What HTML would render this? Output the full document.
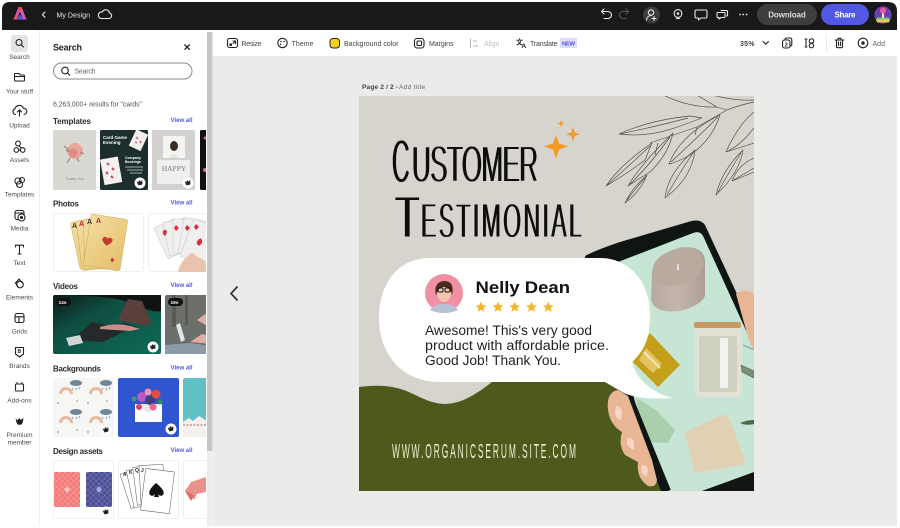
<!DOCTYPE html>
<html><head><meta charset="utf-8"><title>My Design</title>
<style>
html,body{margin:0;padding:0;background:#fff;width:900px;height:528px;overflow:hidden}
svg{display:block;filter:blur(.3px)}
text{font-family:"Liberation Sans",sans-serif}
.lb{font-size:6.5px;fill:#4a4a4a;text-anchor:middle}
.h{font-size:8px;font-weight:bold;fill:#2c2c2c}
.va{font-size:6px;font-weight:bold;fill:#5258e4;text-anchor:end}
.tb{font-size:7px;fill:#444}
.ic{fill:none;stroke:#222;stroke-width:1.1;stroke-linecap:round;stroke-linejoin:round}
.iw{fill:none;stroke:#e8e8e8;stroke-width:1.1;stroke-linecap:round;stroke-linejoin:round}
.leaf{fill:none;stroke:#4b4b47;stroke-width:.65;stroke-linejoin:round}
</style></head><body>
<svg width="900" height="528" viewBox="0 0 900 528" xmlns="http://www.w3.org/2000/svg">
<defs>
<clipPath id="pan"><rect x="40" y="32" width="166" height="494"/></clipPath>
<clipPath id="cv"><rect x="359" y="96" width="395" height="395"/></clipPath>
<filter id="thick" x="-5%" y="-5%" width="110%" height="110%"><feMorphology operator="erode" radius="0 .9" result="a"/><feMorphology in="a" operator="dilate" radius=".45 0"/></filter>
<linearGradient id="lg" x1="0" x2="1" y1="1" y2="0"><stop offset="0" stop-color="#ff5a3c"/><stop offset=".5" stop-color="#d14fd8"/><stop offset="1" stop-color="#ff9a2e"/></linearGradient>
<linearGradient id="vid" x1="0" x2="1" y1="0" y2="1"><stop offset="0" stop-color="#0c1a17"/><stop offset=".35" stop-color="#0f4f42"/><stop offset="1" stop-color="#0d6b55"/></linearGradient>
<linearGradient id="gold" x1="0" x2="1" y1="0" y2="1"><stop offset="0" stop-color="#f4dc9e"/><stop offset="1" stop-color="#e3bf6b"/></linearGradient>
<linearGradient id="cand" x1="0" x2="1"><stop offset="0" stop-color="#b7a99f"/><stop offset=".5" stop-color="#c4b6ab"/><stop offset="1" stop-color="#ad9f95"/></linearGradient>
<pattern id="rain" width="30" height="29" patternUnits="userSpaceOnUse" x="53" y="378">
<rect width="30" height="29" fill="#f6f7f4"/>
<path d="M6 16a7 7 0 0 1 14 0h-3a4 4 0 0 0-8 0z" fill="#eab89f"/>
<ellipse cx="23" cy="5" rx="6" ry="3" fill="#6f8796"/><path d="M20 10l-1 2M24 10l-1 2M27 9l-1 2" stroke="#7fa3b5"/>
<circle cx="5" cy="25" r="1" fill="#8fb3c0"/><circle cx="24" cy="23" r="1" fill="#e6a78f"/>
</pattern>
<pattern id="cardp" width="4" height="4" patternUnits="userSpaceOnUse" patternTransform="rotate(45)"><rect width="4" height="4" fill="#f47a7a"/><path d="M0 0h4M0 0v4" stroke="#fcb3ad" stroke-width=".8"/></pattern>
<pattern id="cardb" width="4" height="4" patternUnits="userSpaceOnUse" patternTransform="rotate(45)"><rect width="4" height="4" fill="#4c4f93"/><path d="M0 0h4M0 0v4" stroke="#8b8dc5" stroke-width=".8"/></pattern>
<g id="crown"><circle r="5.5" fill="#fff"/><path d="M-3-2.5l1.6 1.4L0-3l1.4 1.9L3-2.5 2 2h-4z" fill="#222" transform="rotate(-15)"/></g>
<path id="star" d="M0-5.4L1.6-1.7 5.4-1.5 2.5 1 3.4 4.8 0 2.8-3.4 4.8-2.5 1-5.4-1.5-1.6-1.7z" fill="#f4b52a"/>
</defs>

<rect width="900" height="528" fill="#fff"/>
<rect x="213" y="56" width="684" height="470" fill="#ebebea"/>
<path d="M2 30V10q0-8 8-8H888q9 0 9 9V30z" fill="#191919"/>
<path d="M13.500 19.500 18.500 7h3l5 12.500h-3.600l-3-8-3 8z" fill="url(#lg)"/>
<path d="M17 19.500l3-5 3 5z" fill="#3c6cf0"/><path d="M17.800 7h4.400l-2.200 5z" fill="#ff3d38"/>
<path d="M45 12l-2.600 2.700 2.600 2.700" class="iw" stroke-width="1.300"/>
<text x="56.500" y="17.500" font-size="7" fill="#e6e6e6" textLength="33.500">My Design</text>
<path d="M101 18.500h8a2.800 2.800 0 0 0 .5-5.500 3.800 3.800 0 0 0-7.200-1 3.200 3.200 0 0 0-1.300 6.500z" class="iw"/>

<path d="M602 11.500h6a3.500 3.500 0 0 1 0 7h-4M604 9l-2.500 2.500 2.500 2.500" class="iw"/>
<path d="M628 11.500h-5a3.500 3.500 0 0 0 0 7h3M626 9l2.500 2.500-2.500 2.500" fill="none" stroke="#555" stroke-width="1.100" stroke-linecap="round"/>
<circle cx="651.500" cy="15" r="8.500" fill="#3c3c3c"/>
<circle cx="651" cy="12.500" r="2.700" class="iw"/><path d="M646.500 20c.5-3 2.500-4.500 4.500-4.500M654 16.500v4M652 18.500h4" class="iw"/>
<circle cx="678" cy="13.500" r="3.900" class="iw"/><circle cx="678" cy="13.500" r="1.300" fill="#e8e8e8"/><path d="M676.300 18.500h3.400" class="iw"/>
<path d="M696.500 10h9a1.500 1.500 0 0 1 1.500 1.500v5a1.500 1.500 0 0 1-1.500 1.500H701l-2.500 2v-2h-2a1.500 1.500 0 0 1-1.500-1.500v-5a1.500 1.500 0 0 1 1.500-1.500z" class="iw"/>
<path d="M721 10.500h5.500a1 1 0 0 1 1 1v3.500a1 1 0 0 1-1 1" class="iw"/><path d="M718 12.500h6a1 1 0 0 1 1 1v3a1 1 0 0 1-1 1h-3l-2 1.500V17.500h-1a1 1 0 0 1-1-1v-3a1 1 0 0 1 1-1z" class="iw"/>
<g fill="#e8e8e8"><circle cx="740" cy="14.500" r=".9"/><circle cx="743.300" cy="14.500" r=".9"/><circle cx="746.600" cy="14.500" r=".9"/></g>
<rect x="757" y="4" width="60" height="21" rx="10.500" fill="#3e3e3e"/>
<text x="787" y="17.700" font-size="8" font-weight="bold" fill="#dcdcdc" text-anchor="middle" textLength="37.500">Download</text>
<rect x="821" y="4" width="48" height="21" rx="10.500" fill="#5258e4"/>
<text x="845" y="17.700" font-size="8" font-weight="bold" fill="#fff" text-anchor="middle" textLength="21">Share</text>
<circle cx="883" cy="15" r="8.700" fill="#6a3fb0"/>
<path d="M876 19h14l-1 3.500h-12z" fill="#e9c95b"/><path d="M877 17.500h12v2h-12z" fill="#6ecb7c"/><rect x="882" y="12" width="2" height="6" fill="#f5e3c0"/><circle cx="883" cy="10.500" r="3" fill="#ee5aa0"/>

<g>
<rect x="227.500" y="38.500" width="10" height="9" rx="2" class="ic"/><path d="M233 41h2.500v2.500M235.500 41l-2.500 2.500" class="ic" stroke-width=".9"/><rect x="229.500" y="43.500" width="2.500" height="2.500" fill="#222"/>
<text x="241.500" y="45.800" class="tb" textLength="20">Resize</text>
<circle cx="282.500" cy="43" r="4.700" class="ic"/><circle cx="281" cy="41.500" r=".8" fill="#222"/><circle cx="284" cy="41.500" r=".8" fill="#222"/><circle cx="280.500" cy="44.300" r=".8" fill="#222"/>
<text x="291.500" y="45.800" class="tb" textLength="22">Theme</text>
<rect x="330" y="38.500" width="9.500" height="9.500" rx="3" fill="#f6d21f" stroke="#222" stroke-width="1"/>
<text x="344" y="45.800" class="tb" textLength="54.500">Background color</text>
<rect x="414.500" y="38.500" width="9.500" height="9.500" rx="2.500" class="ic"/><rect x="417" y="41" width="4.500" height="4.500" rx="1" class="ic"/>
<text x="429" y="45.800" class="tb" textLength="24.500">Margins</text>
<path d="M470.500 38.500v9.500M473 41h4M473 46h5" fill="none" stroke="#b5b5b5" stroke-width="1"/>
<text x="484" y="45.800" font-size="7" fill="#bdbdbd" textLength="15.500">Align</text>
<text x="516" y="44.500" font-size="7" font-weight="bold" fill="#222" style="font-family:'Liberation Sans','Noto Sans CJK SC',sans-serif">文</text>
<text x="521.500" y="48" font-size="6.500" font-weight="bold" fill="#222">A</text>
<text x="530" y="45.800" class="tb" textLength="27.500">Translate</text>
<rect x="560" y="38" width="17" height="10" rx="1" fill="#dcdcfb"/>
<text x="562" y="45.300" font-size="5.800" font-weight="bold" fill="#5258e4" textLength="13">NEW</text>
<text x="740" y="46" font-size="7" font-weight="bold" fill="#444" textLength="14.500">35%</text>
<path d="M763 41.500l2.700 2.700 2.700-2.700" class="ic"/>
<rect x="782.500" y="40" width="7.500" height="8" rx="2" class="ic"/><path d="M785 39.500q.5-1.500 2-1.500h3q1.800 0 1.800 2v4.500q0 1.500-1.500 1.500" class="ic"/><text x="784.800" y="46.500" font-size="5.500" font-weight="bold" fill="#222">2</text>
<path d="M805 39h2M805 47h2M806 39v8" class="ic" stroke-width=".9"/><circle cx="811.500" cy="41" r="2.200" class="ic"/><circle cx="811.500" cy="45.600" r="2.200" class="ic"/>
<path d="M826.500 34v18" stroke="#e4e4e4" stroke-width=".8"/>
<path d="M835 40h9M836.500 40v6.500a1.200 1.200 0 0 0 1.200 1.200h3.600a1.200 1.200 0 0 0 1.200-1.200V40M838 40v-1.700h3V40M838.500 42v3.500M840.500 42v3.500" class="ic"/>
<circle cx="863" cy="43" r="4.800" class="ic"/><circle cx="863" cy="43" r="1.700" fill="#222"/>
<text x="872.500" y="45.800" font-size="7" fill="#666" textLength="12.500">Add</text>
</g>

<rect x="11" y="35" width="17" height="17" rx="3" fill="#e4e4e4"/>
<g class="ic" stroke-width="1.500"><circle cx="19" cy="42.500" r="3"/><path d="M21.300 44.800l2.200 2.200"/></g>
<text x="19.500" y="59" class="lb">Search</text>
<g class="ic"><path d="M15.500 73.500h3.500l1.200 1.500h3.300a1 1 0 0 1 1 1v4a1 1 0 0 1-1 1h-8a1 1 0 0 1-1-1v-5.500a1 1 0 0 1 1-1zM15 76.500h9"/></g>
<text x="19.500" y="93.300" class="lb">Your stuff</text>
<g class="ic"><path d="M15.500 114.500a3 3 0 0 1-.5-5.800 4.500 4.500 0 0 1 8.500-.5 3 3 0 0 1 .5 6.200M19.500 116v-6M17.300 112l2.200-2.200 2.200 2.200"/></g>
<text x="19.500" y="127.700" class="lb">Upload</text>
<g class="ic"><circle cx="18" cy="143.500" r="2.400"/><circle cx="16.300" cy="150" r="2.300"/><circle cx="22.700" cy="150" r="2.300"/><path d="M19 146l2.500 2M18.700 150h1.700"/></g>
<text x="19.500" y="162" class="lb">Assets</text>
<g class="ic"><rect x="15" y="178" width="6" height="6" rx="2.500"/><circle cx="22" cy="180" r="2.500"/><circle cx="19.500" cy="184.500" r="3"/></g>
<text x="19.500" y="196.300" class="lb">Templates</text>
<g class="ic"><rect x="15" y="210.500" width="9" height="9" rx="2"/><circle cx="21.500" cy="217.500" r="3.500" fill="#fff"/><circle cx="21.500" cy="217.500" r="1" fill="#222"/><path d="M15 213h8"/></g>
<text x="19.500" y="230.500" class="lb">Media</text>
<path d="M15.500 247v-1.800h8V247M19.500 245.500V254M18 254h3" class="ic" stroke-width="1.200"/>
<text x="19.500" y="265" class="lb">Text</text>
<g class="ic"><path d="M15.500 283l3.500-4 3 3.500"/><circle cx="20" cy="284.500" r="3.300"/><path d="M15.500 283l2.500 3.500"/></g>
<text x="19.500" y="299.300" class="lb">Elements</text>
<g class="ic"><rect x="15" y="313.500" width="9" height="9" rx="2"/><path d="M15 316.800h9M19 316.800v5.700"/></g>
<text x="19.500" y="333.500" class="lb">Grids</text>
<g class="ic"><path d="M15.500 347.500h8v6.500l-4 3-4-3z"/><text x="17.500" y="353" font-size="5" stroke="none" fill="#222" font-weight="bold">B</text></g>
<text x="19.500" y="368" class="lb">Brands</text>
<g class="ic"><rect x="15.500" y="384" width="8" height="7" rx="1"/><path d="M17 384v-1.500M22 384v-1.500"/></g>
<text x="19.500" y="402.300" class="lb">Add-ons</text>
<path d="M15.500 418.500l2.200 1.800 1.500-2.300 1.500 2 2.800-2-1 5.200-1.500 1.500h-3l-1.200-1.500z" fill="#1d1d1d"/>
<text x="19.500" y="437" class="lb">Premium</text>
<text x="19.500" y="444.500" class="lb">member</text>

<path d="M39.500 30v496" stroke="#f0f0f0" stroke-width="1"/>
<rect x="207" y="32" width="5.500" height="419" fill="#c6c6c6"/>
<rect x="207" y="451" width="5.500" height="75" fill="#ededed"/>
<text x="53" y="50.500" font-size="9" font-weight="bold" fill="#222" textLength="29">Search</text>
<path d="M184.500 44.500l5.200 5.200M189.700 44.500l-5.200 5.200" fill="none" stroke="#222" stroke-width="1.300"/>
<rect x="53.500" y="63" width="138.500" height="16" rx="8" fill="#fff" stroke="#8a8a8a" stroke-width="1"/>
<g class="ic" stroke-width="1.100"><circle cx="65" cy="70.500" r="3.300"/><path d="M67.500 73l2.200 2.200"/></g>
<text x="74.500" y="73.300" font-size="7" fill="#666" textLength="21">Search</text>
<text x="53" y="106.500" font-size="7" fill="#555" textLength="89">6,263,000+ results for "cards"</text>

<text x="53" y="124" class="h" textLength="38">Templates</text><text x="192.500" y="122" class="va">View all</text>
<text x="53" y="206.500" class="h" textLength="26">Photos</text><text x="192.500" y="204.500" class="va">View all</text>
<text x="53" y="289" class="h" textLength="25">Videos</text><text x="192.500" y="287" class="va">View all</text>
<text x="53" y="371.500" class="h" textLength="48">Backgrounds</text><text x="192.500" y="369.500" class="va">View all</text>
<text x="53" y="454" class="h" textLength="50">Design assets</text><text x="192.500" y="452" class="va">View all</text>

<g clip-path="url(#pan)">
<rect x="53" y="130" width="43" height="60" rx="1.500" fill="#d9d8d3"/>
<circle cx="75" cy="151" r="8" fill="#e8a79c"/><circle cx="73" cy="153" r="4.500" fill="#dd8b83"/><path d="M64 146l5 4M84 154l-4-2M70 158l-3 5M77 158l2 4M66 150l3 2" stroke="#8e8f7e" stroke-width="1.200"/>
<text x="74.500" y="180" font-size="4" fill="#8d8d87" text-anchor="middle">Thank You</text>
<rect x="100" y="130" width="48" height="60" rx="1.500" fill="#1d2e2e"/>
<text x="103" y="139" font-size="4.500" font-weight="bold" fill="#fff">Card Game</text><text x="103" y="144" font-size="4.500" font-weight="bold" fill="#fff">Evening</text>
<rect x="132" y="131" width="13" height="18" fill="#f3f0ef" transform="rotate(25 138 140)"/><path d="M136 137l2 2M140 141l1 2M135 142l2 1" stroke="#c45a6c" stroke-width="1.500"/>
<rect x="102" y="158" width="18" height="26" fill="#f3f0ef" transform="rotate(-10 110 170)"/><path d="M107 163l2 2M112 168l2 2M106 172l2 2M111 176l2 2" stroke="#bf4f6a" stroke-width="2.200"/>
<text x="125" y="159" font-size="3.500" font-weight="bold" fill="#fff">Company</text><text x="125" y="163" font-size="3.500" font-weight="bold" fill="#fff">Bookings</text><path d="M125 167h18M127 170h16M130 173h12" stroke="#cfd6d6" stroke-width=".7"/>
<use href="#crown" x="140" y="183"/>
<rect x="152" y="130" width="43" height="60" rx="1.500" fill="#d2d1cf"/>
<rect x="163" y="136" width="22" height="22" fill="#f4f4f3"/><ellipse cx="174" cy="146" rx="4" ry="5" fill="#3d2a25"/><path d="M169 158q5-7 10 0z" fill="#e6e3e0"/>
<rect x="157" y="160" width="33" height="24" fill="#f0efee"/>
<text x="174" y="171" font-size="7.500" fill="#7b7b78" text-anchor="middle" style="font-family:'Liberation Serif',serif">HAPPY</text>
<use href="#crown" x="188" y="183"/>
<rect x="200" y="130" width="10" height="60" rx="1.500" fill="#111"/><circle cx="205" cy="138" r="1.500" fill="#d65a86"/><circle cx="205" cy="170" r="2" fill="#e36995"/>

<rect x="53.500" y="213.500" width="90" height="58" rx="2" fill="#fff" stroke="#efefef"/>
<g transform="translate(90 243) rotate(-12)"><rect x="-15" y="-24" width="34" height="48" rx="2" fill="url(#gold)" stroke="#cda75a" stroke-width=".5"/></g>
<g transform="translate(94 243) rotate(-7)"><rect x="-15" y="-24" width="34" height="50" rx="2" fill="url(#gold)" stroke="#cda75a" stroke-width=".5"/></g>
<g transform="translate(99 243) rotate(-1)"><rect x="-15" y="-24" width="34" height="50" rx="2" fill="url(#gold)" stroke="#cda75a" stroke-width=".5"/></g>
<g transform="translate(109 243) rotate(9)"><rect x="-22" y="-26" width="37" height="52" rx="2" fill="url(#gold)" stroke="#cda75a" stroke-width=".5"/><path d="M-7-4q3-3 5 0 2-3 5 0 1 3-5 7-6-4-5-7z" fill="#c43b2e"/><path d="M6 14l2 2-2 3-2-3z" fill="#c43b2e"/></g>
<text x="72" y="228" font-size="7" font-weight="bold" fill="#333">A</text><text x="79" y="226" font-size="7" font-weight="bold" fill="#b23">A</text><text x="87" y="224" font-size="7" font-weight="bold" fill="#333">A</text><text x="96" y="223" font-size="7" font-weight="bold" fill="#b23">A</text>
<rect x="148.500" y="213.500" width="62" height="58" rx="2" fill="#fff" stroke="#efefef"/>
<g fill="#f0eeee" stroke="#bdbdbd" stroke-width=".4"><rect x="160" y="222" width="22" height="34" transform="rotate(-25 171 239)"/><rect x="166" y="220" width="22" height="34" transform="rotate(-12 177 237)"/><rect x="173" y="219" width="22" height="34"/><rect x="181" y="219" width="22" height="36" transform="rotate(10 192 237)"/><rect x="186" y="222" width="26" height="40" transform="rotate(20 199 242)"/></g>
<path d="M163 231q3-3 4 1-1 3-2 4-3-2-2-5zM176 225l3 3-3 3-2-3zM187 225l3 3-3 3-2-3zM196 224l3 3-3 3-2-3zM198 240q3-3 4 0 1 3-3 6-4-3-1-6z" fill="#d92e3d"/>
<path d="M178 272q2-10 10-16 4-6 8 0l8 4 4 12z" fill="#e9c3ae"/>

<rect x="53" y="295" width="108" height="59" rx="2" fill="url(#vid)"/>
<path d="M53 295h108v16q-10 2-30-8-20-8-78-8z" fill="#0e1312"/>
<path d="M118 320l10-21 14 2 5 12 4 10-4 3z" fill="#5b3f3a"/><path d="M70 340q10-6 22-18l15 3 18-2 12 4-14 5-20 10z" fill="#25292a"/><path d="M66 338l14-3 3 8-14 3z" fill="#cfd8d5"/><path d="M100 327q20-6 40 2l-10 2q-15-1-30-2z" fill="#c78f8c"/>
<rect x="56" y="298" width="15" height="8" rx="4" fill="#111"/><text x="58.500" y="304" font-size="4.800" font-weight="bold" fill="#fff">14s</text>
<use href="#crown" x="153" y="347"/>
<rect x="165" y="295" width="46" height="59" rx="2" fill="#6c6e69"/>
<path d="M165 345l25-2 21 3v8h-46z" fill="#8b9aa6"/><path d="M176 325l4-2 5 17-4 2z" fill="#dfe4e6"/><path d="M197 320l8-6 6 4v10zM190 342l12-8 9 2v8z" fill="#e0aca3"/><path d="M172 295h4v32h-4zM185 295h3v30h-3z" fill="#585a56"/>
<rect x="168" y="298" width="15" height="8" rx="4" fill="#111"/><text x="170.500" y="304" font-size="4.800" font-weight="bold" fill="#fff">19s</text>

<rect x="53" y="378" width="61" height="59" rx="2" fill="url(#rain)"/>
<use href="#crown" x="106" y="430"/>
<rect x="118" y="378" width="61" height="59" rx="2" fill="#2f55d0"/>
<rect x="135" y="404" width="27" height="18" fill="#fff"/><path d="M135 404l13 9 14-9z" fill="#e8e8ee"/>
<circle cx="142" cy="397" r="5" fill="#b558c0"/><circle cx="150" cy="400" r="5" fill="#3e3f80"/><circle cx="156" cy="394" r="4.500" fill="#e24f3e"/><circle cx="148" cy="392" r="3.500" fill="#f08fb8"/><circle cx="139" cy="407" r="3" fill="#d7456f"/><circle cx="153" cy="407" r="3.500" fill="#e8668a"/><circle cx="160" cy="402" r="2.500" fill="#2f8f62"/><circle cx="134" cy="399" r="2.500" fill="#3d9a6a"/>
<use href="#crown" x="171" y="429"/>
<rect x="183" y="378" width="30" height="59" rx="2" fill="#61c0c6"/><path d="M183 422l6-4 4 3 6-5 6 4 6-2v19h-28z" fill="#f4f1ec"/><path d="M183 425h28" stroke="#c98f92" stroke-width="1.500" stroke-dasharray="2 1.500"/>

<rect x="53.500" y="460.500" width="60" height="58" rx="2" fill="#fff" stroke="#f0f0f0"/>
<rect x="54" y="472" width="26" height="35" rx="1.500" fill="url(#cardp)"/><rect x="86" y="472" width="26" height="35" rx="1.500" fill="url(#cardb)"/>
<path d="M67 486l3 3.500-3 3.500-3-3.500z" fill="#fbc6c0"/><path d="M99 486l3 3.500-3 3.500-3-3.500z" fill="#a6a8d8"/>
<use href="#crown" x="106" y="512"/>
<rect x="118.500" y="460.500" width="60" height="58" rx="2" fill="#fff" stroke="#f0f0f0"/>
<g fill="#fff" stroke="#555" stroke-width=".5"><rect x="125" y="470" width="22" height="36" transform="rotate(-18 136 488)"/><rect x="130" y="468" width="22" height="38" transform="rotate(-12 141 487)"/><rect x="135" y="466" width="22" height="38" transform="rotate(-7 146 485)"/><rect x="140" y="465" width="24" height="38" transform="rotate(-3 152 484)"/><rect x="143" y="470" width="29" height="42" transform="rotate(7 157 491)"/></g>
<path d="M156 483q-9 8-6 12 3 2 5-1l-1 3h5l-1-3q2 3 5 1 3-4-7-12z" fill="#111"/>
<text x="123" y="476" font-size="5" font-weight="bold" fill="#222">A</text><text x="129" y="474" font-size="5" font-weight="bold" fill="#222">K</text><text x="135" y="472" font-size="5" font-weight="bold" fill="#222">Q</text><text x="141" y="472" font-size="5" font-weight="bold" fill="#222">J</text>
<rect x="183.500" y="460.500" width="30" height="58" rx="2" fill="#fff" stroke="#f0f0f0"/>
<path d="M185 491l6-9 15-5 3 14-12 3-3 6z" fill="#e8928c"/><path d="M185 491l9 4-3 6z" fill="#e36a6a"/>
</g>

<text x="362" y="89" font-size="6.600" font-weight="bold" fill="#444" textLength="36">Page 2 / 2 -</text>
<text x="399" y="89" font-size="6.600" fill="#666" textLength="26">Add title</text>
<path d="M237.500 286.500l-6.500 7 6.500 7" fill="none" stroke="#333" stroke-width="1.700"/>

<g clip-path="url(#cv)">
<rect x="359" y="96" width="395" height="395" fill="#d7d3cd"/>

<g class="leaf">
<path d="M663 95Q690 108 717 107Q705 100 697 95M712 95Q735 101 754 100M717 107L727 110M727 110Q740 105 754 102"/>
<path d="M619 134Q650 120 690 116L702 118L683 125Q650 138 619 134ZM619 134Q650 128 688 118"/>
<path d="M727 110L697 127L650 143M697 127L695 135"/>
<path d="M606 186Q620 165 652 143L645 160Q625 175 606 186ZM606 186Q630 165 650 146"/>
<path d="M628 186Q640 165 673 133Q668 155 650 172Q640 178 628 186ZM630 184Q650 165 670 137M658 143L655 155"/>
<path d="M625 203Q632 188 647 175Q640 192 625 203ZM627 200Q636 188 645 178"/>
<path d="M669 164Q680 135 720 115Q712 140 690 155Q678 162 669 164ZM671 162Q695 140 718 117"/>
<path d="M665 198Q668 172 695 150Q692 178 665 198ZM667 195Q680 172 693 153"/>
<path d="M726 152Q738 125 754 112M726 152L754 143M726 152Q740 146 754 128"/>
<path d="M716 195Q722 170 743 150Q740 172 716 195ZM718 192Q730 170 741 153"/>
<path d="M732 181Q738 165 754 158M732 181L754 168M732 181L754 172"/>
</g>

<path d="M556 135l3 8.500 9 3-9 3-3 9-3-9-9-3 9-3z" fill="#f59a20"/>
<path d="M573 127l1.700 5.500 5.500 1.700-5.500 1.700-1.700 6-1.700-6-5.500-1.700 5.500-1.700z" fill="#f59a20"/>
<path d="M561 120l1 2.500 2.700 1-2.700 1-1 2.700-1-2.700-2.700-1 2.700-1z" fill="#f59a20"/>

<g fill="#111" filter="url(#thick)">
<text transform="translate(392 182.500) scale(.4 1)" font-size="61">C</text>
<text transform="translate(412 182) scale(.5 1)" font-size="52" textLength="252" lengthAdjust="spacing">USTOMER</text>
<text transform="translate(395 237.500) scale(.68 1)" font-size="59">T</text>
<text transform="translate(421 237.500) scale(.47 1)" font-size="49" textLength="342" lengthAdjust="spacing">ESTIMONIAL</text>
</g>

<path d="M359 387c15-2 30-2 45 3 13 5 24 13 40 14 16 0 30-8 48-22l125 0 45 40 10 69H359z" fill="#4e5a1b"/>

<path d="M585 256Q596 250 620 242L688 222Q700 218 705 225L756 335V500H665L600 350z" fill="#0f1512"/>
<path d="M618 262L693 233Q701 230 704 238L754 348V472L702 491H667L640 420 618 340z" fill="#c6e5d5"/>
<path d="M702 491L755 472V491z" fill="#121612"/>

<path d="M652 272Q653 254 682 247Q705 246 705 262V296Q700 306 680 311Q655 314 651 300z" fill="url(#cand)"/>
<ellipse cx="679" cy="267" rx="25" ry="18" fill="#b9a99f" transform="rotate(-18 679 267)"/><path d="M678 264v6" stroke="#eee" stroke-width="1.500"/>
<rect x="695" y="323" width="47" height="74" rx="4" fill="#e3e1d6"/>
<rect x="694" y="322" width="47" height="6" rx="2" fill="#c89a63"/>
<rect x="699" y="336" width="38" height="56" rx="3" fill="#cfd0bf"/><rect x="720" y="338" width="8" height="50" fill="#f2f2ee"/>
<path d="M650 333l30 32-22 22-25-25z" fill="#c4a01a"/><path d="M646 348l16 16-9 9-14-13z" fill="#e3c460"/><path d="M644 352l16 16" stroke="#f0e6c0" stroke-width="2"/>
<path d="M685 432L722 415Q727 414 730 420L745 460Q745 464 741 465L698 473Q695 473 694 470z" fill="#e2d0b5"/>
<path d="M636 398L656 410L675 430 668 443 648 442 640 420z" fill="#a9cfac"/>
<path d="M740 423q7-3 14-3v4q-8 2-14-1z" fill="#4d6a48"/>
<path d="M741 365l13 6v7l-12-6zM743 345l11 5" stroke="#596a55" fill="#7c8d78" stroke-width=".6"/>
<path d="M630 398L668 491" stroke="#0f1512" stroke-width="6"/>
<path d="M618 390Q606 392 608 410Q610 425 622 432Q618 445 625 455L638 462Q636 478 648 486Q656 488 657 480L652 460L640 428L628 396z" fill="#e8b595"/>
<path d="M616 406q5 0 6 6l-1 8q-6-2-6-8zM627 438q5-1 7 4v7q-6 0-7-6zM642 465q5 0 6 5l-1 6q-5-1-6-6z" fill="#f5d7c5"/>
<path d="M736 294q5-4 12-3l6 3v58l-6-15z" fill="#e8b595"/>

<path d="M430 258H600C630 258 650 283 650 314C650 338 645 350 632 362C636 378 650 392 672 398C650 400 630 397 622 392L605 382H440C400 382 379 352 379 318C379 284 398 258 430 258Z" fill="#fff"/>
<circle cx="444" cy="293" r="19" fill="#f18fa5"/>
<path d="M430 310q4-6 14-6t14 6q-6 3-14 3t-14-3z" fill="#b7c2d3"/>
<ellipse cx="444" cy="293" rx="7" ry="9" fill="#f3c7ad"/>
<path d="M436 296q-3-14 8-15 11 0 8 14-2-8-8-8-6 0-8 9z" fill="#4a2a1d"/>
<rect x="438" y="288" width="5" height="4" rx="1" fill="none" stroke="#111"/><rect x="445" y="288" width="5" height="4" rx="1" fill="none" stroke="#111"/>
<text x="475.500" y="293" font-size="17" font-weight="bold" fill="#111" textLength="94.500" lengthAdjust="spacingAndGlyphs">Nelly Dean</text>
<use href="#star" x="481" y="307"/><use href="#star" x="498" y="307"/><use href="#star" x="514.800" y="307"/><use href="#star" x="531.500" y="307"/><use href="#star" x="548.300" y="307"/>
<g font-size="13.500" fill="#222">
<text x="425" y="335" textLength="167" lengthAdjust="spacingAndGlyphs">Awesome! This's very good</text>
<text x="425" y="350" textLength="184" lengthAdjust="spacingAndGlyphs">product with affordable price.</text>
<text x="425" y="365" textLength="136" lengthAdjust="spacingAndGlyphs">Good Job! Thank You.</text>
</g>
<text transform="translate(392 458) scale(.42 1)" font-size="20" fill="#f1eed5" textLength="438" lengthAdjust="spacing">WWW.ORGANICSERUM.SITE.COM</text>
</g>
</svg>
</body></html>
